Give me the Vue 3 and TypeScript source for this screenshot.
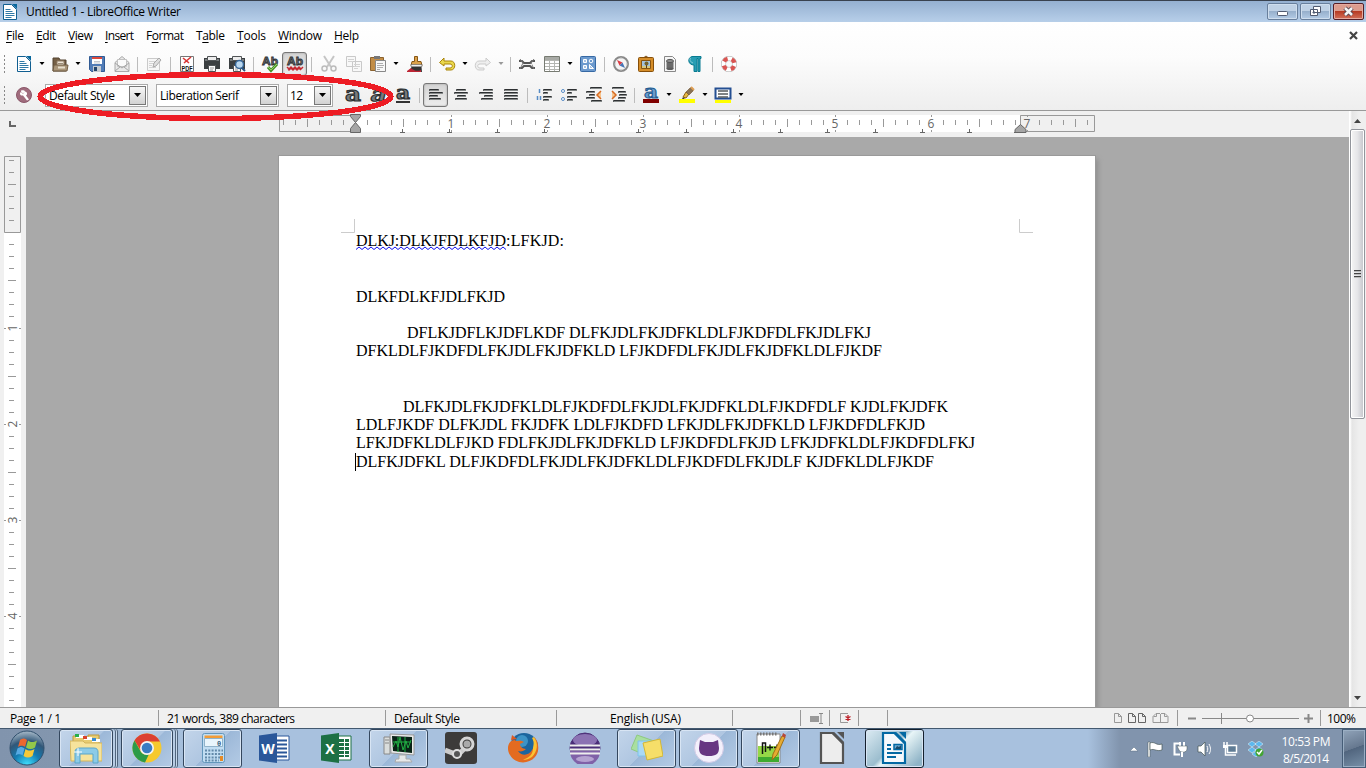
<script setup lang="ts">
type Cell = [icon: string, width: number]

// Stretches a piece of text to an exact advance width through letter spacing.
const vFit = {
  mounted(el: HTMLElement, binding: { value: number }) {
    const natural = el.getBoundingClientRect().width
    const gaps = Math.max(1, (el.textContent ?? '').trim().length - 1)
    el.style.letterSpacing = `${(binding.value - natural) / gaps}px`
    el.style.width = `${binding.value}px`
  },
}

const menus = [
  { pre: '', key: 'F', post: 'ile', w: 18 },
  { pre: '', key: 'E', post: 'dit', w: 20 },
  { pre: '', key: 'V', post: 'iew', w: 25 },
  { pre: '', key: 'I', post: 'nsert', w: 29 },
  { pre: 'F', key: 'o', post: 'rmat', w: 38 },
  { pre: 'T', key: 'a', post: 'ble', w: 29 },
  { pre: '', key: 'T', post: 'ools', w: 29 },
  { pre: '', key: 'W', post: 'indow', w: 44 },
  { pre: '', key: 'H', post: 'elp', w: 25 },
]

const standardBar: Cell[] = [
  ['new', 25], ['arrow', 11], ['open', 25], ['arrow', 12], ['save', 25], ['mail', 25], ['sep', 7],
  ['edit', 26], ['sep', 7], ['pdf', 25], ['print', 25], ['preview', 25], ['sep', 8],
  ['spell', 25], ['auto', 25], ['sep', 9], ['cut', 25], ['copy', 25], ['paste', 24], ['arrow', 12],
  ['brush', 25], ['sep', 7], ['undo', 25], ['arrow', 11], ['redo', 25], ['arrowOff', 12], ['sep', 7],
  ['find', 25], ['table', 25], ['arrow', 11], ['grid', 25], ['sep', 8], ['compass', 25],
  ['picture', 25], ['database', 24], ['pilcrow', 26], ['sep', 8], ['help', 25],
]

const formatBar: Cell[] = [
  ['bold', 25], ['italic', 25], ['under', 25], ['sep', 8], ['left', 25], ['center', 25],
  ['right', 25], ['full', 25], ['sep', 8], ['number', 25], ['bullet', 25], ['outdent', 25],
  ['indent', 25], ['sep', 7], ['fontcolor', 25], ['arrow', 11], ['marker', 25], ['arrow', 11],
  ['fill', 25], ['arrow', 11],
]

const line = (x: number, y: number, w: number) =>
  `<rect x="${x}" y="${y}" width="${w}" height="2" rx="1" fill="#2e3133"/><rect x="${x + 1}" y="${y + 1}" width="${w - 1}" height="1" fill="#858989"/>`

const letterA = '<text x="0" y="14" font-family="DejaVu Serif" font-weight="bold" font-size="20" textLength="16" lengthAdjust="spacingAndGlyphs" fill="#777b7d" stroke="#2c3032" stroke-width="1.1"'
const abText = '<text x="0" y="8.5" font-family="Liberation Sans" font-weight="bold" font-size="11.500" textLength="16" lengthAdjust="spacingAndGlyphs" fill="#6a6e70" stroke="#303335" stroke-width=".8">Ab</text>'
const printer = '<path d="M0 2h16v11H0z" fill="#3b3f41"/><path d="M1 3h14v2H1z" fill="#767b7d"/><path d="M3.500.500h9v4h-9z" fill="#ededed" stroke="#505456"/><path d="M4.500 9.500h7v6h-7z" fill="#fafafa" stroke="#505456"/><path d="M6 12h4M6 14h3" stroke="#999"/>'

const icons: Record<string, string> = {
  arrow: '<path d="M5.500 6h5L8 9z" fill="#000"/>',
  arrowOff: '<path d="M5.500 6h5L8 9z" fill="#999"/>',
  new: '<path d="M1.500.500h8l5 5v10h-13z" fill="#fff" stroke="#115f91"/><path d="M10 0h5v5z" fill="#07679d"/><path d="M3.500 5.500h5M3.500 7.500h7M3.500 9.500h9M3.500 11.500h9M3.500 13.500h6" stroke="#3079a6"/>',
  open: '<path d="M1 2h6l1 2h6v11H1z" fill="#755f45" stroke="#534330"/><path d="M5 5h7v9H5z" fill="#eee5d7" stroke="#907d64"/><path d="M6 7.500h5" stroke="#9b8c78"/><path d="M2 9h14l-1 6H1z" fill="#aa967a" stroke="#715c42"/><path d="M6 10.500h7v2H6z" fill="#e7decc"/>',
  save: '<path d="M.500.500h15v15h-13l-2-2z" fill="#517cb7" stroke="#315b94"/><path d="M3 1h10v7H3z" fill="#fff"/><path d="M3 1h10v2H3z" fill="#dd493c"/><path d="M5 5.500h6M5 7h6" stroke="#c4c8ce"/><path d="M4 10h8v6H4z" fill="#c6ccd2"/><path d="M5 11h3v4H5z" fill="#24456b"/>',
  mail: '<path d="M1 6.500 8 .500l7 6v9H1z" fill="#e9e9e9" stroke="#aaa"/><path d="M3.500 3.500h9v7h-9z" fill="#fafafa" stroke="#c2c2c2"/><path d="m1 7 7 5 7-5M1 15l5-4M15 15l-5-4" fill="none" stroke="#a6a6a6"/>',
  edit: '<path d="M1.500 2.500h12v12h-12z" fill="#f7f7f7" stroke="#cacaca"/><path d="M3 5.500h6M3 7.500h5M3 9.500h3M3 11.500h7" stroke="#d3d3d3"/><path d="m7 11 1-4 5-5 2 2-5 6z" fill="#dedede" stroke="#a9a9a9"/>',
  pdf: '<path d="M1.500.500h13v15h-13z" fill="#fff" stroke="#777"/><path d="m4 2 6 5M12 1 5 7" stroke="#d93635" stroke-width="1.600" fill="none"/><text x="2.500" y="14.500" textLength="11" lengthAdjust="spacingAndGlyphs" font-family="Liberation Sans" font-weight="bold" font-size="7" fill="#111">PDF</text>',
  print: printer,
  preview: printer + '<circle cx="10.500" cy="8.500" r="4" fill="#b9d7ef" stroke="#356597" stroke-width="1.500"/><path d="m13 12 3 3" stroke="#295483" stroke-width="2"/>',
  spell: abText + '<path d="m6 11 3 3.500L15 8" fill="none" stroke="#4a942a" stroke-width="3"/><path d="m6 11 3 3 6-6" fill="none" stroke="#94cf66"/>',
  auto: abText + '<path d="m0 11 2 2 2-2 2 2 2-2 2 2 2-2 2 2 2-2M1 13l1 1 2-2 2 2 2-2 2 2 2-2 2 2" fill="none" stroke="#c52a31" stroke-width="1.500"/>',
  cut: '<path d="m3 0 7 11M13 0 6 11" stroke="#c5c5c5" stroke-width="2"/><circle cx="3.500" cy="12.500" r="2.500" fill="none" stroke="#bbb" stroke-width="1.500"/><circle cx="12.500" cy="12.500" r="2.500" fill="none" stroke="#bbb" stroke-width="1.500"/>',
  copy: '<path d="M.500.500h9v10h-9zM6.500 5.500h9v10h-9z" fill="#f8f8f8" stroke="#c9c9c9"/><path d="M2 3.500h6M2 5.500h4M8 8.500h6M8 10.500h6M8 12.500h4" stroke="#d2d2d2"/>',
  paste: '<path d="M.500 1.500h13v13H.500z" fill="#c28d47" stroke="#8b622f"/><path d="M4 0h6v3H4z" fill="#777"/><path d="M5.500 4.500h10v11h-10z" fill="#f8f8f8" stroke="#888"/><path d="M7 7.500h6M7 9.500h7M7 11.500h6M7 13.500h3" stroke="#adadad"/>',
  brush: '<path d="M7.500.500h3v5h3.500l1 4H4l1-4h2.500z" fill="#dba14a" stroke="#885715"/><path d="M4 8.500h11v2H4z" fill="#efefef" stroke="#555" stroke-width=".6"/><path d="M4.500 11h10l.500 5H2z" fill="#333"/><path d="M4 12 0 15v1h14v-2c-4 2-7 0-9-1" fill="#bd2635"/>',
  undo: '<path d="m5 2-4.500 4.500L5 10V8h6c3 0 3 4 0 4H7v2h5c5 0 5-9 0-9H5z" fill="#ead84c" stroke="#a98307"/>',
  redo: '<path d="m11 2 4.500 4.500L11 10V8H5c-3 0-3 4 0 4h4v2H4C-1 14-1 5 4 5h7z" fill="#eee" stroke="#cbcbcb"/>',
  find: '<path d="M0 5h3l2 2h6l2-2h3M0 12h3l2-2h6l2 2h3" fill="none" stroke="#555" stroke-width="2"/><path d="m1 3 3 4-3 6M15 3l-3 4 3 6" fill="none" stroke="#777"/><path d="M4 8.500h9" stroke="#eee"/>',
  table: '<path d="M.500.500h15v15H.500z" fill="#fff" stroke="#777b72"/><path d="M1 1h14v3H1z" fill="#a8aaa5"/><path d="M1 4.500h14M1 7.500h14M1 10.500h14M1 13.500h14M5.500 4v11M10.500 4v11" stroke="#b4b6b2"/>',
  grid: '<rect x=".5" y=".5" width="15" height="15" rx="1" fill="#6c9ace" stroke="#3669a4"/><path d="M3.500 3.500h3v3h-3zM3.500 9.500h3v3h-3zM9.500 12.500v-4l4 4z" fill="#a9c5e5" stroke="#fff"/><circle cx="11" cy="5" r="1.800" fill="#6c9ace" stroke="#fff"/>',
  compass: '<circle cx="8" cy="8" r="7" fill="#f4f4f4" stroke="#8a8a8a" stroke-width="2"/><path d="M8 1v2M8 13v2M1 8h2M13 8h2" stroke="#bbb"/><path d="m4 4 5.500 2.500-3 3z" fill="#dc3b43"/><path d="m12 12-5.500-2.500 3-3z" fill="#4674b5"/>',
  picture: '<rect x=".5" y="1.500" width="15" height="14" rx="1" fill="#d58d29" stroke="#864f09"/><path d="M3.500 4.500h9v8h-9z" fill="#a4c2dc" stroke="#865411"/><path d="M4 10h8v2H4z" fill="#d8c77e"/><path d="M8.500 12V8" stroke="#573a15"/><circle cx="8.500" cy="7.500" r="2" fill="#76632c"/><path d="M6 1.500 8 0l2 1.500" fill="none" stroke="#805014"/>',
  database: '<path d="M2.500.500h8l3 3v12h-11z" fill="#f6f6f6" stroke="#888"/><path d="M4.500 5h7v8h-7z" fill="#6a6a6a"/><ellipse cx="8" cy="5" rx="3.500" ry="1.600" fill="#8e8e8e" stroke="#555"/><ellipse cx="8" cy="12.800" rx="3.500" ry="1.300" fill="#5c5c5c"/>',
  pilcrow: '<path d="M5 .500h9v2h-1v13h-2v-13h-1v13H7V9C1 9 0 2 5 .500z" fill="#289db3" stroke="#087b91"/><path d="M4 2c-2 1-1 4 2 5" fill="none" stroke="#8acbd6"/>',
  help: '<circle cx="8" cy="8" r="5.500" fill="none" stroke="#aaa" stroke-width="5"/><circle cx="8" cy="8" r="5.500" fill="none" stroke="#fff" stroke-width="4"/><circle cx="8" cy="8" r="5.500" fill="none" stroke="#d95552" stroke-width="4" stroke-dasharray="4.3 4.34" stroke-dashoffset="-2.2"/>',
  wrench: '<circle cx="8" cy="8" r="7.500" fill="#a06c7d" stroke="#8b5769"/><path d="M5 4.500 7 6.500l2-2c-1-2-5-1-4 0zm4 0c2 0 3 3 1 4l3 4-2 1-4-5C4 9 3 6 5 5l2 2z" fill="#fff"/>',
  bold: letterA + '>a</text>',
  italic: letterA + ' transform="skewX(-14) translate(3 0)">a</text>',
  under: letterA.replace('y="14"', 'y="11.5"').replace('font-size="20"', 'font-size="18"').replace('textLength="16"', 'textLength="14"').replace('x="0"', 'x="1"') + '>a</text><path d="M1 15h14" stroke="#333" stroke-width="2"/>',
  left: line(1, 2, 10) + line(1, 5, 14) + line(1, 8, 9) + line(1, 11, 12),
  center: line(3, 2, 10) + line(1, 5, 14) + line(4, 8, 9) + line(2, 11, 12),
  right: line(5, 2, 10) + line(1, 5, 14) + line(6, 8, 9) + line(3, 11, 12),
  full: line(1, 2, 14) + line(1, 5, 14) + line(1, 8, 14) + line(1, 11, 14),
  number: '<path d="M3.500 2v4M1.500 9v4M4.500 9v4" stroke="#568bc5" stroke-width="1.500"/>' + line(7, 2, 9) + line(7, 5, 5) + line(7, 9, 9) + line(7, 12, 6),
  bullet: '<circle cx="2" cy="4" r="1.500" fill="#fff" stroke="#568bc5"/><circle cx="2" cy="12" r="1.500" fill="#fff" stroke="#568bc5"/>' + line(6, 2, 10) + line(6, 5, 5) + line(6, 9, 10) + line(6, 12, 6),
  outdent: line(4, 0, 12) + line(0, 4, 9) + line(3, 7, 6) + line(0, 10, 9) + line(5, 13, 11) + '<path d="m15 4-4 4 4 4" fill="#f8c48d" stroke="#d76c23" stroke-width="1.500"/>',
  indent: line(1, 0, 12) + line(7, 4, 8) + line(8, 7, 8) + line(7, 10, 8) + line(2, 13, 12) + '<path d="m1 4 4 4-4 4" fill="#f8c48d" stroke="#d76c23" stroke-width="1.500"/>',
  fontcolor: '<text x="1" y="11" font-family="DejaVu Serif" font-weight="bold" font-size="19" textLength="14" lengthAdjust="spacingAndGlyphs" fill="#6d9ccc" stroke="#235b91" stroke-width="1">a</text><path d="M0 12h16v4H0z" fill="#800000"/>',
  marker: '<path d="m4 10 3-5 3 2-3 4z" fill="#e7ba43" stroke="#8e6318"/><path d="m7 5 4-4c2-1 4 1 3 3L10 8z" fill="#8a7254" stroke="#6d5232" stroke-width=".6"/><path d="m12 0 3 3" stroke="#e0a055" stroke-width="2"/><path d="m4 10-1 2h3" fill="#48412d"/><path d="M0 12h16v4H0z" fill="#ff0"/>',
  fill: '<path d="M.500 1.500h15v10H.500z" fill="#fff" stroke="#244f92" stroke-width="2"/><path d="M3 4h10M3 7h10M3 10h10" stroke="#555b5e" stroke-width="1.600"/><path d="M0 13h16v3H0z" fill="#ff0"/>',
}

const hTicks = Array.from({ length: 68 }, (_, i) => i - 6)
  .filter((k) => k % 8 !== 0)
  .map((k) => ({ x: 76.5 + k * 12, tall: Math.abs(k) % 8 === 4 }))
  .filter((t) => t.x < 811)
const hNumbers = [1, 2, 3, 4, 5, 6, 7]
const tabs = Array.from({ length: 14 }, (_, i) => Math.round(76 + (i + 1) * 47.24) + 0.5)
const vTicks = Array.from({ length: 46 }, (_, i) => i - 6)
  .filter((k) => k % 8 !== 0)
  .map((k) => ({ y: 76.5 + k * 12, tall: Math.abs(k) % 8 === 4 }))
const vNumbers = [1, 2, 3, 4]

const wave = 'M0 3.500' + Array.from({ length: 50 }, (_, i) => `L${(i + 1) * 3} ${i % 2 ? 3.5 : 1}`).join('')

const paragraphs = [
  { cls: 'p2', lines: [{ t: 'DLKFDLKFJDLFKJD', w: 149 }] },
  {
    cls: 'p3',
    lines: [
      { t: 'DFLKJDFLKJDFLKDF DLFKJDLFKJDFKLDLFJKDFDLFKJDLFKJ', w: 464 },
      { t: 'DFKLDLFJKDFDLFKJDLFKJDFKLD LFJKDFDLFKJDLFKJDFKLDLFJKDF', w: 526 },
    ],
  },
  {
    cls: 'p4',
    lines: [
      { t: 'DLFKJDLFKJDFKLDLFJKDFDLFKJDLFKJDFKLDLFJKDFDLF KJDLFKJDFK', w: 545 },
      { t: 'LDLFJKDF DLFKJDL FKJDFK LDLFJKDFD LFKJDLFKJDFKLD LFJKDFDLFKJD', w: 569 },
      { t: 'LFKJDFKLDLFJKD FDLFKJDLFKJDFKLD LFJKDFDLFKJD LFKJDFKLDLFJKDFDLFKJ', w: 619 },
      { t: 'DLFKJDFKL DLFJKDFDLFKJDLFKJDFKLDLFJKDFDLFKJDLF KJDFKLDLFJKDF', w: 578 },
    ],
  },
]

const apps = [
  { name: 'explorer', state: 'open stack' },
  { name: 'chrome', state: 'open stack wide' },
  { name: 'calc', state: 'open' },
  { name: 'word', state: '' },
  { name: 'excel', state: '' },
  { name: 'monitor', state: 'open' },
  { name: 'steam', state: '' },
  { name: 'firefox', state: '' },
  { name: 'eclipse', state: '' },
  { name: 'notes', state: 'open' },
  { name: 'cat', state: 'open' },
  { name: 'npp', state: 'open' },
  { name: 'office', state: '' },
  { name: 'writer', state: 'open active' },
]

const sheet = (c: string, fill: string) =>
  `<path d="M4 1h12l10 10v20H4z" fill="${fill}" stroke="${c}" stroke-width="2.200"/><path d="M16 1l10 10" stroke="${c}" stroke-width="3"/><path d="M20 0h7v7z" fill="${c}"/>`

const tile = (c: string, letter: string, body: string) =>
  `<path d="M16 4h14v24H16z" fill="#fff" stroke="${c}"/>${body}<path d="M0 3.500 18 1v30L0 28.500z" fill="${c}"/><text x="9" y="21.500" text-anchor="middle" font-family="Open Sans" font-weight="bold" font-size="14" fill="#fff">${letter}</text>`

const appIcons: Record<string, string> = {
  explorer: '<path d="M3 8V4h10l2 3h3V3h11v25H3z" fill="#e7cc72" stroke="#bd9a3e"/><path d="M6 3h8v3H6zM14 5h8v3h-8zM22 7h8v3h-8z" fill="#fff"/><path d="M5 2h4v3H5z" fill="#27ae4b"/><path d="M13 4h4v3h-4z" fill="#db452e"/><path d="M22 6h4v3h-4z" fill="#398bd0"/><path d="M0 9h13l2 2h17v18H1z" fill="#f6e39c" stroke="#d3b55c"/><path d="M5 31V20c0-3 2-4 5-4h14c3 0 4 2 4 4v11h-5V22H10v9z" fill="#8ccbe8" stroke="#5ba5c9"/><path d="M8 16v8M4 20h8" stroke="#fff" stroke-width="1"/>',
  chrome: '<circle cx="16" cy="16" r="14.500" fill="#f6c92d"/><path d="M3.500 8.500A14.500 14.500 0 0 1 29 9.500H16L10 19z" fill="#dc4132"/><path d="M3.500 8.500 10 20c2 3 6 3 8 2l-4 8.400A14.500 14.500 0 0 1 3.500 8.500z" fill="#2d9b48"/><circle cx="16" cy="16" r="7" fill="#f4f4f4"/><circle cx="16" cy="16" r="5.300" fill="#397cc3"/>',
  calc: '<rect x="5.500" y="1.500" width="22" height="29" rx="2" fill="#c1ddf2" stroke="#6397bc"/><path d="M7.500 3.500h18v3h-18z" fill="#f29c38"/><path d="M7.500 6.500h18v8h-18z" fill="#e9f5fc" stroke="#91b3ca"/><text x="20" y="13.500" font-family="Liberation Mono" font-weight="bold" font-size="7" fill="#315879">0</text><path d="M8 18.500h18M8 22h18M8 25.500h18M8 28.500h14" stroke="#6289a9" stroke-width="2" stroke-dasharray="2 1.3"/><path d="M23 24h3v5h-3z" fill="#e58b28"/>',
  word: tile('#2a579a', 'W', '<path d="M18 8.500h10M18 12.500h10M18 16.500h10M18 20.500h10M18 24.500h10" stroke="#2a579a" stroke-width="2"/>'),
  excel: tile('#1d7044', 'X', '<path d="M18 7h10v18H18z" fill="#1d7044"/><path d="M18 10.500h10M18 14.500h10M18 18.500h10M18 22.500h10M23.500 7v18" stroke="#fff"/>'),
  monitor: '<path d="M1 5h6v17H1z" fill="#dadddc" stroke="#888"/><path d="M2 8h4M2 11h4" stroke="#888"/><path d="m7 2 24 1v20L8 21z" fill="#e9eaea" stroke="#999"/><path d="m9 4 20 1v16L10 19z" fill="#092216"/><path d="m10 15 3-6 2 6 2-10 3 13 3-9 2 7 3-8M10 10h18M15 5v15M22 5v15" fill="none" stroke="#20ad42"/><path d="M16 23h7v4h4l2 3H12l1-3h3z" fill="#e6e8e9" stroke="#aaa"/>',
  steam: '<rect width="32" height="32" rx="3" fill="#3c3b3a"/><path d="m0 18 13 5 8-8" fill="none" stroke="#ccc" stroke-width="5"/><circle cx="22" cy="12" r="6" fill="#3c3b3a" stroke="#d5d5d5" stroke-width="3"/><circle cx="22" cy="12" r="3.500" fill="#aaa"/><circle cx="12" cy="22" r="4" fill="#555" stroke="#ddd" stroke-width="2"/>',
  firefox: '<circle cx="17" cy="15" r="14" fill="#1c659e"/><circle cx="15" cy="9" r="6" fill="#3d93c6"/><path d="M8 8c-7 0-9 9-5 15 5 9 18 10 25 2 5-5 4-16-1-20 2 6 1 9-2 13-3 6-11 6-14 1 3 1 6 0 8-2-4 0-6-3-6-5l4-2c-3-2-6-1-8-1z" fill="#e36b20"/><path d="M27 5c5 7 3 15-2 20-3 2-6 3-9 3 7-3 10-6 10-12 1-5 1-6-1-10z" fill="#fbc332"/><path d="M4 8 5 3l5 4" fill="#df5a20"/>',
  eclipse: '<circle cx="16" cy="16" r="15" fill="#4a2d77" stroke="#50327a"/><ellipse cx="16" cy="8" rx="12" ry="6" fill="#8b72b3"/><path d="M1 19a15 15 0 0 0 30 0z" fill="#8061a8"/><path d="M1 13.500h30M1 17.500h30M1 21.500h30" stroke="#eee" stroke-width="1.800"/><ellipse cx="16" cy="27" rx="9" ry="3" fill="#b5a2d1"/>',
  notes: '<path d="m6 3 17 6-6 15-17-7z" fill="#a9dfa0" stroke="#8ec980"/><path d="M7 9h15v15H7z" fill="#a9d9f5" stroke="#7ec3ea"/><path d="m12 11 17-4 3 17-16 4z" fill="#f6de69" stroke="#d3b736"/>',
  cat: '<circle cx="16" cy="16" r="14.500" fill="#f3f0fb" stroke="#d2cae5"/><path d="m7 8 5 2h8l5-2 1 8c0 6-3 8-10 8S6 22 6 16z" fill="#673682"/>',
  npp: '<path d="M2 2h23v29H2z" fill="#fff" stroke="#888"/><path d="M3 14h21v16H3z" fill="#95d847"/><path d="M3 25h21v5H3z" fill="#3eaa30"/><path d="M2 2h20" stroke="#777" stroke-width="3" stroke-dasharray="1.500 1.500"/><path d="M7.500 22V11h3v9" fill="none" stroke="#111" stroke-width="1.500"/><path d="M12 15.500h6M15 12.500v6M19 15.500h6M22 12.500v6" stroke="#111" stroke-width="1.300"/><path d="m18 22 9-18 3 1-8 18-5 5z" fill="#e6ab32" stroke="#a06f16"/><path d="m27 4 1-3 3 2-1 3z" fill="#b84839"/>',
  office: sheet('#545454', '#ededed'),
  writer: sheet('#0369a3', '#f5f9fc') + '<path d="M8 13h4M8 17h4M8 21h15M8 25h9" stroke="#0369a3" stroke-width="2.200"/><path d="M15 12.500h8v5h-8z" fill="#75abd0" stroke="#0369a3" stroke-width="1.500"/><path d="m16 17 2-3 2 1 2-2v4z" fill="#164b6c"/>',
}
</script>

<template>
  <div class="screen">
    <header class="titlebar">
      <svg class="ico" viewBox="0 0 16 16" v-html="icons.new"></svg>
      <span v-fit="155" class="title">Untitled 1 - LibreOffice Writer</span>
      <div class="winbtns">
        <span class="wbtn"><svg width="29" height="15"><rect x="9.500" y="7.500" width="10" height="4" rx="1" fill="#fff" stroke="#525c72" /></svg></span>
        <span class="wbtn"><svg width="29" height="15"><path d="M12.500 2.500h7v6h-7zM9.500 5.500h7v6h-7z" fill="#fff" stroke="#525c72" /><path d="M12 8h2v1h-2z" fill="#7894b4" stroke="#525c72" /></svg></span>
        <span class="wbtn close"><svg width="29" height="15"><path d="m11 4 7 7M18 4l-7 7" stroke="#574450" stroke-width="4.500" /><path d="m11 4 7 7M18 4l-7 7" stroke="#f4f4f4" stroke-width="2.500" /></svg></span>
      </div>
    </header>

    <section class="chrome">
      <nav class="menubar">
        <span v-for="m in menus" :key="m.key + m.post" v-fit="m.w" class="menu">{{ m.pre }}<u>{{ m.key }}</u>{{ m.post }}</span>
        <svg class="docclose" width="9" height="9"><path d="m1 1 7 7M8 1 1 8" stroke="#444" stroke-width="2.200" /></svg>
      </nav>

      <div class="toolbar">
        <i class="grip"></i>
        <span v-for="([name, w], i) in standardBar" :key="i" class="cell" :class="{ pressed: name === 'auto' }" :style="{ width: w + 'px' }">
          <i v-if="name === 'sep'" class="sep"></i>
          <svg v-else class="ico" viewBox="0 0 16 16" v-html="icons[name]"></svg>
        </span>
      </div>

      <div class="toolbar second">
        <i class="grip"></i>
        <span class="cell wrench"><svg class="ico" viewBox="0 0 16 16" v-html="icons.wrench"></svg></span>
        <div class="combo style"><span v-fit="66">Default Style</span><b><svg width="7" height="4"><path d="M0 0h7L3.500 4z" /></svg></b></div>
        <div class="combo font"><span v-fit="79">Liberation Serif</span><b><svg width="7" height="4"><path d="M0 0h7L3.500 4z" /></svg></b></div>
        <div class="combo size"><span v-fit="13">12</span><b><svg width="7" height="4"><path d="M0 0h7L3.500 4z" /></svg></b></div>
        <span v-for="([name, w], i) in formatBar" :key="i" class="cell" :class="{ pressed: name === 'left' }" :style="{ width: w + 'px' }">
          <i v-if="name === 'sep'" class="sep"></i>
          <svg v-else class="ico" viewBox="0 0 16 16" v-html="icons[name]"></svg>
        </span>
      </div>
    </section>

    <main class="work">
      <div class="editor">
        <div class="hruler">
          <svg class="corner" width="7" height="6"><path d="M1 0v5h6" fill="none" stroke="#666" stroke-width="2" /></svg>
          <svg class="hscale" width="820" height="22">
            <rect x="76" y="4" width="665" height="17" fill="#fff" />
            <path d="M76 4.500H.500v16H76M741.500 20.500V4.500h74v16h-74" fill="none" stroke="#999" />
            <path v-for="t in hTicks" :key="t.x" :d="t.tall ? `M${t.x} 8v8` : `M${t.x} 9v5`" stroke="#999" />
            <g v-for="n in hNumbers" :key="n">
              <path :d="`M${76.5 + n * 96} 4v2M${76.5 + n * 96} 19v2`" stroke="#999" />
              <text :x="76 + n * 96" y="17" text-anchor="middle" class="num">{{ n }}</text>
            </g>
            <path v-for="x in tabs" :key="x" :d="`M${x} 18v3M${x - 2.5} 21.500h5`" stroke="#666" />
            <path d="M71.500 3.500h10v2l-5 6-5-6zM71.500 21.500v-4l5-6 5 6v4z" fill="#a5a5a5" stroke="#666" />
            <path d="M736 21.500v-3l5.500-5 5.500 5v3z" fill="#a5a5a5" stroke="#666" />
          </svg>
        </div>
        <div class="below">
          <svg class="vruler" width="26" height="570">
            <g transform="translate(0 19)">
              <path d="M4 76h17v475H4z" fill="#fff" />
              <path d="M4.500.500h16v76h-16z" fill="#f0f0f0" stroke="#999" />
              <path v-for="t in vTicks" :key="t.y" :d="t.tall ? `M8 ${t.y}h8` : `M9 ${t.y}h5`" stroke="#999" />
              <g v-for="n in vNumbers" :key="n">
                <path :d="`M4 ${76.5 + n * 96}h2M19 ${76.5 + n * 96}h2`" stroke="#999" />
                <text :transform="`translate(17 ${76 + n * 96}) rotate(-90)`" text-anchor="middle" class="num">{{ n }}</text>
              </g>
            </g>
          </svg>
          <div class="canvas">
            <article class="page">
              <div class="crops">
                <svg width="14" height="14"><path d="M0 13.500h13.500V0" fill="none" stroke="#ccc" /></svg>
                <svg width="14" height="14"><path d="M.500 0v13.500H14" fill="none" stroke="#ccc" /></svg>
              </div>
              <div class="copy">
                <div class="ln"><span v-fit="150" class="word">DLKJ:DLKJFDLKFJD<svg class="wave" width="151" height="5"><path :d="wave" fill="none" stroke="#11e" /></svg></span><span v-fit="58">:LFKJD:</span></div>
                <div v-for="p in paragraphs" :key="p.cls" :class="p.cls">
                  <div v-for="l in p.lines" :key="l.t" class="ln"><span v-fit="l.w">{{ l.t }}</span></div>
                </div>
              </div>
            </article>
          </div>
        </div>
      </div>
      <aside class="scroll">
        <svg width="7" height="4"><path d="M0 4h7L3.500 0z" fill="#444" /></svg>
        <div class="thumb"><i></i><i></i><i></i></div>
        <svg class="down" width="7" height="4"><path d="M0 0h7L3.500 4z" fill="#444" /></svg>
      </aside>
    </main>

    <footer class="status">
      <span class="st s1"><span v-fit="51">Page 1 / 1</span></span>
      <span class="st s2"><span v-fit="128">21 words, 389 characters</span></span>
      <span class="st s3"><span v-fit="66">Default Style</span></span>
      <span class="st s4"><span v-fit="71">English (USA)</span></span>
      <span class="st s5"></span>
      <span class="st s6"><svg width="14" height="11"><path d="M0 3h9v6H0z" fill="#999" /><path d="M9 .500h4M9 10.500h4M11 1v9" stroke="#888" /></svg></span>
      <span class="st s6"><svg width="12" height="12"><path d="M9 1.500H1.500v9H9" fill="none" stroke="#999" /><path d="M9 3v6M6.500 4.500l5 3M11.500 4.500l-5 3" stroke="#bd1f27" stroke-width="1.300" /></svg></span>
      <span class="st s6"></span>
      <span class="st s7"><svg width="56" height="10" fill="none"><path d="M.500.500h4l3 3v6h-7zM4.500.500v3h3" stroke="#999" /><path d="M14.500.500h4l3 3v6h-7zM24.500.500h4l3 3v6h-7zM18.500.500v3h3M28.500.500v3h3" stroke="#666" /><path d="M46 .500h-4l-3 3v6h15v-6l-3-3h-4M46.500 1v8M42.500.500v3h-3M50.500.500v3h3" stroke="#999" /></svg></span>
      <span class="st s8"><svg width="127" height="11"><path d="M0 5.500h8M116 5.500h9M120.500 1v9" stroke="#888" stroke-width="2" /><path d="M14 5.500h97M33.500 0v11" stroke="#888" /><circle cx="62" cy="5.500" r="3.500" fill="#fff" stroke="#888" /></svg></span>
      <span v-fit="29">100%</span>
    </footer>

    <footer class="taskbar">
      <div class="start">
        <svg width="36" height="36" viewBox="0 0 36 36">
          <defs><radialGradient id="orb" cx=".5" cy="1" r="1"><stop offset="0" stop-color="#41e2ff" /><stop offset=".4" stop-color="#137bb1" /><stop offset=".7" stop-color="#315778" /><stop offset="1" stop-color="#a9bbca" /></radialGradient></defs>
          <circle cx="18" cy="18" r="17" fill="url(#orb)" stroke="#304f6d" />
          <path d="M11 10c3-2 5-2 7 0l-2 7c-3-2-5-1-7 0z" fill="#ec672f" />
          <path d="M19 10.500c3 2 5 2 9 0l-2 7c-3 2-6 2-9 0z" fill="#93c849" />
          <path d="M8.500 18.500c3-2 5-2 7 0l-2 7c-3-2-5-1-7 0z" fill="#57aae3" />
          <path d="M16.500 19c3 2 5 2 9 0l-2 7c-3 2-6 2-9 0z" fill="#f6c938" />
        </svg>
      </div>
      <div v-for="a in apps" :key="a.name" class="slot">
        <div class="app" :class="a.state"><svg width="32" height="32" viewBox="0 0 32 32" v-html="appIcons[a.name]"></svg></div>
      </div>
      <div class="tray">
        <svg width="8" height="16"><path d="M0 10h8L4 6z" fill="#fff" stroke="#596c80" stroke-width=".5" /></svg>
        <svg width="16" height="16"><path d="M1 1h2v15H1z" fill="#fff" stroke="#455" stroke-width=".5" /><path d="M3 2c5-2 6 3 12 1v6c-6 2-7-2-12 0z" fill="#fff" stroke="#455" stroke-width=".7" /></svg>
        <svg width="16" height="16"><path d="M8 2.500H2.500v11H8" fill="none" stroke="#fff" stroke-width="2" /><path d="M8 1v4M12 1v4" stroke="#fff" stroke-width="2" /><path d="M5 5h10v3c0 4-7 4-8 1z" fill="#fff" stroke="#455" stroke-width=".5" /><path d="M10 11v5" stroke="#fff" stroke-width="2" /></svg>
        <svg width="16" height="16"><path d="M1 5h3l4-4v14l-4-4H1z" fill="#fff" stroke="#455" stroke-width=".7" /><path d="M10 5c1 2 1 4 0 6M12 3c2 4 2 7 0 10" fill="none" stroke="#fff" /></svg>
        <svg width="16" height="16"><path d="M5.500 4.500h9v7h-9z" fill="#607c95" stroke="#fff" stroke-width="1.500" /><path d="M8 14h6M2 1v4M5 1v4M3.500 5v9H8" fill="none" stroke="#fff" stroke-width="1.500" /><path d="M1 4h5v3H1z" fill="#fff" /></svg>
        <svg width="17" height="16"><path d="m5 0 4 3-4 3-4-3zM12 0l4 3-4 3-4-3zM5 6l4 3-4 3-4-3zM12 6l4 3-4 3-4-3zM5 13l4-3 3 3-3 3z" fill="#5cb8ed" stroke="#e4f5ff" stroke-width=".5" /><circle cx="12.500" cy="11.500" r="4" fill="#43a533" /><path d="m10 11 2 2 3-4" fill="none" stroke="#fff" stroke-width="1.500" /></svg>
      </div>
      <div class="clock"><span v-fit="49">10:53 PM</span><span v-fit="46">8/5/2014</span></div>
      <div class="peek"></div>
    </footer>

    <svg class="highlight" width="362" height="54"><ellipse cx="180.500" cy="26.500" rx="175.500" ry="22" fill="none" stroke="#ed1c24" stroke-width="5.500" shape-rendering="crispEdges" /></svg>
  </div>
</template>

<style>
html, body { margin: 0; overflow: hidden; }
</style>

<style scoped>
* { box-sizing: border-box; }
.screen { position: relative; width: 1366px; height: 768px; display: flex; flex-direction: column; overflow: hidden; font-family: "Open Sans", "Noto Sans", sans-serif; font-size: 12px; color: #000; background: #f0f0f0; }
.screen span { white-space: nowrap; }
svg { display: block; flex: none; }
.ico { width: 16px; height: 16px; overflow: visible; }

.titlebar { height: 22px; flex: none; display: flex; align-items: center; padding-left: 2px; border-top: 1px solid #39424f; background: linear-gradient(#95b0d1, #b7cfe9); }
.title { display: inline-block; margin-left: 8px; line-height: 18px; }
.winbtns { margin-left: auto; display: flex; gap: 2px; padding-right: 2px; }
.wbtn { width: 31px; height: 17px; border: 1px solid #687f9c; border-radius: 2px; box-shadow: inset 0 0 0 1px #cfdeee; background: linear-gradient(#bfd1e5 45%, #97b0cc 50%, #b4cce6); }
.close { border-color: #561f27; box-shadow: inset 0 0 0 1px #e5aaa0; background: linear-gradient(#dc9c8e 45%, #b73b24 50%, #d3705a); }

.chrome { height: 89px; flex: none; border-bottom: 1px solid #999; background: linear-gradient(#fff, #fcfcfc 40%, #eee); }
.menubar { height: 27px; display: flex; align-items: center; gap: 12px; padding: 0 8px 0 6px; }
.menu { display: block; line-height: 18px; padding-top: 1px; }
.menu u { text-underline-offset: 2px; text-decoration-thickness: 1px; }
.docclose { margin-left: auto; }

.toolbar { height: 30px; display: flex; align-items: center; padding-left: 4px; }
.second { height: 32px; }
.grip { width: 1px; height: 19px; margin-right: 6px; background: repeating-linear-gradient(#888 0 2px, transparent 2px 4px); }
.cell { height: 24px; flex: none; display: flex; align-items: center; justify-content: center; }
.cell .ico { margin-left: -4px; margin-right: -4px; }
.pressed { border: 1px solid #777; border-radius: 3px; background: linear-gradient(#d4d4d4, #ededed); box-shadow: inset 0 0 2px #999; }
.sep { width: 1px; height: 15px; background: #bcbcbc; }
.wrench { width: 26px; }
.combo { height: 23px; flex: none; display: flex; align-items: center; border: 1px solid #aaa; background: #fff; padding: 0 1px 0 3px; }
.combo span { display: block; line-height: 18px; padding-top: 1px; }
.combo b { width: 17px; height: 19px; margin-left: auto; display: flex; align-items: center; justify-content: center; border: 1px solid #777; background: linear-gradient(#f7f7f7, #d2d2d2); }
.style { width: 103px; margin-left: 8px; }
.font { width: 123px; margin-left: 8px; }
.size { width: 46px; margin: 0 7px 0 8px; }
.size span { margin-left: -1px; }

.work { flex: none; height: 596px; display: flex; }
.editor { width: 1349px; flex: none; }
.hruler { height: 26px; display: flex; padding-left: 9px; background: #f0f0f0; }
.corner { margin: 10px 263px 0 0; }
.num { font: 12px "Open Sans", sans-serif; fill: #666; }
.below { height: 570px; display: flex; }
.vruler { background: #f0f0f0; }
.canvas { width: 1323px; padding: 19px 0 0 253px; overflow: hidden; background: #a9a9a9; }
.page { width: 816px; height: 552px; background: #fff; box-shadow: 0 0 0 1px #9a9a9a, 3px 3px 5px #8f8f8f; padding-top: 63px; }
.crops { display: flex; justify-content: space-between; padding: 0 62px 0 62px; }
.copy { margin-top: -0.8px; padding-left: 77px; font: 16px/18.4px "Liberation Serif", serif; color: #000; }
.ln { display: flex; height: 18.4px; }
.ln span { display: block; }
.word { position: relative; }
.wave { position: absolute; left: 0; top: 14px; }
.p2 { margin-top: 37.500px; }
.p3 { margin-top: 17.600px; }
.p3 .ln:first-child { padding-left: 51px; }
.p4 { margin-top: 36.800px; }
.p4 .ln:first-child { padding-left: 47px; }
.p4 .ln:last-child { margin-left: -1px; border-left: 1px solid #000; }

.scroll { width: 17px; display: flex; flex-direction: column; align-items: center; padding: 8px 1px 7px 1px; background: linear-gradient(90deg, #fff 1px, #e5e5e5 3px, #efefef 60%); }
.thumb { width: 15px; height: 290px; margin-top: 6px; display: flex; flex-direction: column; align-items: center; justify-content: center; gap: 1px; border: 1px solid #92959c; border-radius: 2px; box-shadow: inset 0 0 0 1px #fff; background: linear-gradient(90deg, #f5f5f5, #e5e5e8 50%, #c3c4ca); }
.thumb i { width: 7px; height: 2px; background: #444; border-bottom: 1px solid #bbb; }
.down { margin-top: auto; }

.status { height: 21px; flex: none; display: flex; align-items: center; border-top: 1px solid #999; line-height: 20px; background: #f0f0f0; }
.status > span { flex: none; }
.status span[style] { padding-top: 1px; }
.st { height: 16px; display: flex; align-items: center; border-right: 1px solid #999; }
.s1 { width: 159px; padding-left: 10px; }
.s2 { width: 227px; padding-left: 8px; }
.s3 { width: 171px; padding-left: 8px; }
.s4 { width: 176px; padding-left: 53px; }
.s5 { width: 68px; }
.s6 { width: 29px; padding-left: 9px; }
.s7 { width: 290px; padding-left: 226px; }
.s8 { width: 143px; padding-left: 10px; margin-right: 6px; }

.taskbar { height: 40px; flex: none; display: flex; border-top: 1px solid #435970; background: linear-gradient(90deg, #8194ad 0, #8396ae 55px, #9fb8d4 130px, #a8c1de 200px, #a8c1de 1088px, #8194ad 1120px); }
.start { width: 58px; flex: none; padding: 1px 0 0 9px; }
.slot { width: 62px; flex: none; padding-left: 1px; display: flex; }
.app { position: relative; width: 59px; height: 39px; padding-top: 3px; display: flex; justify-content: center; }
.app > svg { flex: none; }
.open { border: 1px solid #34475e; border-radius: 3px; padding-top: 2px; box-shadow: inset 0 0 0 1px #d8e5f4; background: linear-gradient(135deg, #c3d5ea, #afc6e1 50%, #9cb8d8 51%, #b4cbe5); }
.stack { width: 54px; box-shadow: inset 0 0 0 1px #d8e5f4, 2px 0 0 #b7cce4, 3px 0 0 #50657d, 4px 0 0 #c5d7eb, 5px 0 0 #50657d; }
.wide { width: 52px; }
.active { border-color: #14202d; background: linear-gradient(135deg, #dcebf3, #9bbdce 45%, #e8f5f7 52%, #8fb4c7 90%); }
.tray { margin-left: auto; margin-right: 6px; width: 134px; display: flex; align-items: center; justify-content: space-between; }
.clock { width: 72px; flex: none; display: flex; flex-direction: column; align-items: center; padding-top: 4px; color: #fff; line-height: 17px; }
.clock span { display: block; }
.peek { width: 24px; flex: none; border: 1px solid #465d77; box-shadow: inset 0 0 0 1px #9aaec3; background: linear-gradient(160deg, #91a4ba, #66788f 49%, #51657e 50%, #7890a8); }

.highlight { position: absolute; left: 35px; top: 70px; pointer-events: none; }
</style>
